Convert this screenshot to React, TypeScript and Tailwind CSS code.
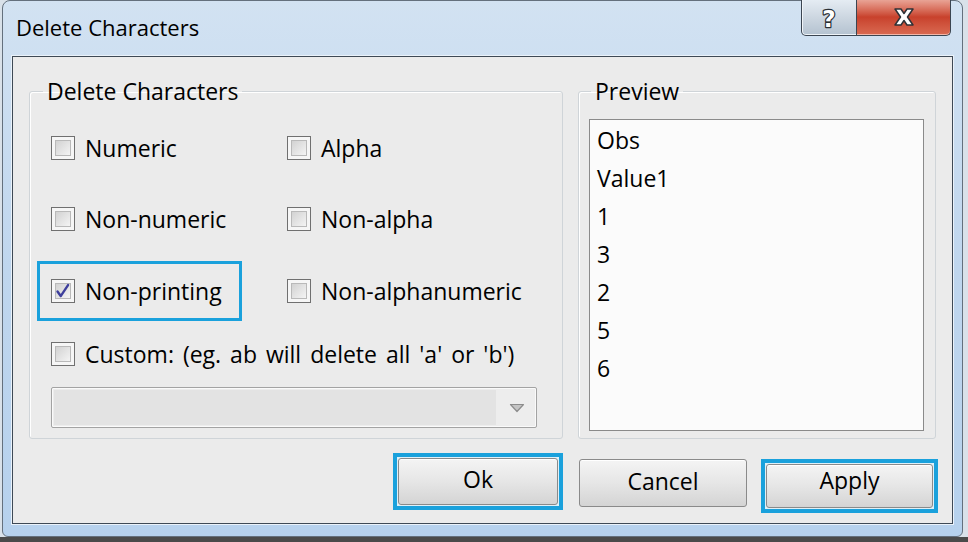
const FONT = "font-['Open_Sans','Noto_Sans',sans-serif]"

function CheckBox({ checked = false }: { checked?: boolean }) {
  return (
    <div className="relative w-[24px] h-[24px] shrink-0 border border-[#707070] bg-[#f6f6f6] p-[3px]">
      <div className="w-full h-full border border-[#b9b9b9] bg-gradient-to-br from-[#d2d2d2] to-[#f4f4f4]" />
      {checked && (
        <svg viewBox="0 0 24 24" className="absolute inset-0 w-full h-full">
          <path d="M6 12.5 L9.5 17.5 L17.5 5.5" fill="none" stroke="#3e3f9c" strokeWidth="2.6" strokeLinejoin="round" strokeLinecap="round" />
        </svg>
      )}
    </div>
  )
}

function Option({ label, checked = false, focused = false, wide = false }: { label: string; checked?: boolean; focused?: boolean; wide?: boolean }) {
  let box = "border-transparent w-[236px]"
  if (focused) box = "border-[#1aa1dc] w-[205px]"
  else if (wide) box = "border-transparent [word-spacing:3px]"
  return (
    <div className={`flex items-center gap-[10px] h-[60px] border-[3px] pl-[11px] ${box}`}>
      <CheckBox checked={checked} />
      <span className="text-[23px] leading-[30px] text-black whitespace-nowrap">{label}</span>
    </div>
  )
}

function CaptionButtons() {
  return (
    <div className="flex -mt-[2px] mr-[11px]">
      <div className="w-[56px] h-[37px] rounded-bl-[5px] border border-t-0 border-[#3b4551] bg-gradient-to-b from-[#e6edf4] via-[#cdd7e1] to-[#b4c2d0] shadow-[inset_0_-1px_0_#eef3f8,inset_1px_0_0_#f0f4f8] flex items-center justify-center">
        <svg width="26" height="30" viewBox="0 0 26 30" className="mt-[2px]">
          <text x="13" y="24" textAnchor="middle" fontSize="23" fontWeight="bold" fontFamily="'DejaVu Sans', sans-serif" fill="#ffffff" stroke="#2a2f36" strokeWidth="2.4" paintOrder="stroke" strokeLinejoin="round">?</text>
        </svg>
      </div>
      <div className="w-[94px] h-[37px] rounded-br-[5px] border border-l-0 border-t-0 border-[#3b4551] bg-gradient-to-b from-[#eaa89b] via-[#c8412c] to-[#d96a52] shadow-[inset_0_-1px_0_#f2b6a8] flex items-center justify-center">
        <svg width="24" height="20" viewBox="0 0 24 20">
          <path d="M3 2 H9 L12 6.5 L15 2 H21 L15.5 10 L21 18 H15 L12 13.5 L9 18 H3 L8.5 10 Z" fill="#ffffff" stroke="#2e3136" strokeWidth="1.5" strokeLinejoin="round" />
        </svg>
      </div>
    </div>
  )
}

function PushButton({ label, focused, wide, lift }: { label: string; focused?: boolean; wide: string; lift?: boolean }) {
  const face = (
    <div className={`w-full h-full rounded-[3px] border border-[#8a8a8a] bg-gradient-to-b from-[#f4f4f4] via-[#e6e6e6] to-[#d4d4d4] shadow-[inset_0_1px_0_#ffffff] flex items-center justify-center ${lift ? "pb-[12px]" : "pb-[5px]"}`}>
      <span className="text-[23px] leading-[30px] text-black">{label}</span>
    </div>
  )
  if (!focused) return <div className={wide}>{face}</div>
  return <div className={`${wide} border-[4px] border-[#1aa1dc] p-[1px] bg-[#dff0f8]`}>{face}</div>
}

export default function App() {
  const preview = ["Obs", "Value1", "1", "3", "2", "5", "6"]

  return (
    <div className={`w-[968px] h-[542px] bg-[#d9e1e9] flex flex-col ${FONT}`}>
      <div className="ml-[2px] w-[961px] h-[537px] rounded-t-[8px] rounded-b-[6px] border border-[#64707d] bg-gradient-to-b from-[#d2e2f2] via-[#bfd6ee] to-[#b6d1ed] flex flex-col">
        {/* title bar */}
        <div className="h-[55px] flex items-start justify-between">
          <span className="pl-[13px] pt-[11px] text-[22px] leading-[30px] text-black">Delete Characters</span>
          <CaptionButtons />
        </div>

        {/* client area */}
        <div className="mx-[9px] h-[468px] border border-[#3e4955] shadow-[0_0_0_1px_#eaf2fa] bg-[#ebebeb] flex flex-col pt-[20px]">
          <div className="flex gap-[15px] pl-[16px]">
            <fieldset className="w-[534px] h-[362px] border border-[#cfd4d8] rounded-[3px] shadow-[inset_1px_1px_0_#ffffff] p-0 m-0">
              <legend className="ml-[13px] px-[4px] text-[23px] leading-[28px] text-black">Delete Characters</legend>
              <div className="pl-[7px] pt-[8px] flex flex-col">
                <div className="h-[70px] flex items-center">
                  <Option label="Numeric" />
                  <Option label="Alpha" />
                </div>
                <div className="h-[71px] flex items-center">
                  <Option label="Non-numeric" />
                  <Option label="Non-alpha" />
                </div>
                <div className="h-[67px] flex items-end">
                  <div className="w-[236px]">
                    <Option label="Non-printing" checked focused />
                  </div>
                  <div className="h-[60px] flex items-center -mt-[2px]">
                    <Option label="Non-alphanumeric" />
                  </div>
                </div>
                <div className="h-[65px] flex items-center">
                  <Option label="Custom: (eg. ab will delete all 'a' or 'b')" wide />
                </div>
                <div className="mt-[1px] ml-[14px] w-[486px] h-[41px] rounded-[2px] border border-[#a3a3a3] bg-[#ededed] shadow-[inset_0_0_0_1px_#fafafa] flex">
                  <div className="flex-1 m-[2px] bg-[#e3e3e3]" />
                  <div className="w-[38px] flex items-center justify-center">
                    <svg width="16" height="10" viewBox="0 0 16 10">
                      <path d="M1.5 1.5 H14.5 L8 8.5 Z" fill="#c4c4c4" stroke="#8c8c8c" strokeWidth="1.2" strokeLinejoin="round" />
                    </svg>
                  </div>
                </div>
              </div>
            </fieldset>

            <fieldset className="w-[358px] h-[362px] border border-[#cfd4d8] rounded-[3px] shadow-[inset_1px_1px_0_#ffffff] p-0 m-0">
              <legend className="ml-[12px] px-[4px] text-[23px] leading-[28px] text-black">Preview</legend>
              <div className="pl-[10px] pt-[14px]">
                <div className="w-[335px] h-[312px] border border-[#8a8a8a] bg-[#fbfbfb] pl-[7px] pt-[1px]">
                  {preview.map(v => (
                    <div key={v} className="text-[23px] leading-[38px] text-black">{v}</div>
                  ))}
                </div>
              </div>
            </fieldset>
          </div>

          {/* buttons */}
          <div className="mt-[14px] flex items-start justify-end pr-[14px]">
            <PushButton label="Ok" focused wide="w-[170px] h-[57px]" />
            <div className="ml-[16px] mt-[6px]">
              <PushButton label="Cancel" wide="w-[168px] h-[48px]" />
            </div>
            <div className="ml-[14px] mt-[6px]">
              <PushButton label="Apply" focused lift wide="w-[177px] h-[54px]" />
            </div>
          </div>
        </div>
      </div>
      <div className="flex-1 bg-[#4a4a4a]" />
    </div>
  )
}
